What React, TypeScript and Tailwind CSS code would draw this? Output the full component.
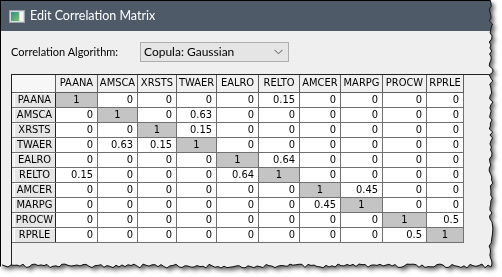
import React from "react";

const names = ["PAANA", "AMSCA", "XRSTS", "TWAER", "EALRO", "RELTO", "AMCER", "MARPG", "PROCW", "RPRLE"];

const pairs: [number, number, string][] = [
  [0, 5, "0.15"],
  [1, 3, "0.63"],
  [2, 3, "0.15"],
  [4, 5, "0.64"],
  [6, 7, "0.45"],
  [8, 9, "0.5"],
];

function valueAt(r: number, c: number) {
  if (r === c) return "1";
  for (const [a, b, v] of pairs) {
    if ((a === r && b === c) || (a === c && b === r)) return v;
  }
  return "0";
}

// jagged torn edge along right and bottom
function tornPoints() {
  let seed = 7;
  const rnd = () => {
    seed = (seed * 9301 + 49297) % 233280;
    return seed / 233280;
  };
  const pts: [number, number][] = [[0, 0], [490, 0]];
  for (let y = 3; y < 266; y += 3) pts.push([490 + rnd() * 4 - 1, y]);
  pts.push([491, 267]);
  for (let x = 488; x > 0; x -= 3) pts.push([x, 265 + rnd() * 4 - 1]);
  pts.push([0, 267]);
  return pts;
}

function WindowIcon() {
  return (
    <svg width="16" height="13" viewBox="0 0 16 13">
      <rect x="0.5" y="0.5" width="15" height="12" fill="#d9dde0" stroke="#9aa3a8" />
      <defs>
        <linearGradient id="tl" x1="0" y1="0" x2="1" y2="1">
          <stop offset="0" stopColor="#2f8f8a" />
          <stop offset="1" stopColor="#7fbf6a" />
        </linearGradient>
      </defs>
      <rect x="2" y="2" width="8" height="9" fill="url(#tl)" />
      <rect x="11" y="2" width="3" height="9" fill="#f4f6f7" />
    </svg>
  );
}

export default function App() {
  const pts = tornPoints();
  const clip = "polygon(" + pts.map(([x, y]) => `${x}px ${y}px`).join(",") + ")";
  const edge = pts.slice(1, pts.length - 1).map(([x, y]) => `${x},${y}`).join(" ");

  return (
    <div className="relative w-[502px] h-[277px] bg-white overflow-hidden font-['Lato',Arial,sans-serif]">
      <div className="drop-shadow-[3px_3px_2px_rgba(0,0,0,0.6)]">
        <div
          className="w-[502px] h-[277px] bg-[#efefef] border-l border-t border-black flex flex-col"
          style={{ clipPath: clip }}
        >
          <div className="h-[30px] bg-[#4f5a68] flex items-center pl-[8px] gap-[5px] text-white text-[12.5px]">
            <WindowIcon />
            <span>Edit Correlation Matrix</span>
          </div>

          <div className="flex items-center pl-[10px] mt-[11px] text-black">
            <span className="w-[129px] text-[11px]">Correlation Algorithm:</span>
            <div className="w-[149px] h-[20px] bg-[#e5e5e5] border border-[#adadad] flex items-center justify-between pl-[3px] pr-[5px] text-[12px]">
              <span>Copula: Gaussian</span>
              <svg width="9" height="6" viewBox="0 0 9 6">
                <path d="M0.5 0.8 L4.5 4.8 L8.5 0.8" fill="none" stroke="#555" strokeWidth="1" />
              </svg>
            </div>
          </div>

          <div className="ml-[10px] mt-[12px] flex-1 border-l border-t border-[#222] text-[11px] text-black font-['DejaVu_Sans_Condensed','DejaVu_Sans',sans-serif]">
            <div className="grid grid-cols-[44px_42px_40px_39px_40px_42px_41px_41px_42px_44px_37px] w-fit">
              <div className="h-[18px] bg-[#f7f7f7] border-r border-b border-[#5e5e5e]" />
              {names.map((n) => (
                <div
                  key={n}
                  className="h-[18px] bg-[#f0f0f0] border-r border-b border-[#5e5e5e] flex items-center justify-center"
                >
                  {n}
                </div>
              ))}
              {names.map((rn, r) => (
                <React.Fragment key={rn}>
                  <div className="h-[15px] pl-[2px] border-b border-[#707070] bg-[#efefef]">
                    <div className="h-full bg-[#e6e6e6] border-r border-[#222] shadow-[inset_1px_1px_0_#fff] flex items-center justify-center">
                      {rn}
                    </div>
                  </div>
                  {names.map((cn, c) =>
                    r === c ? (
                      <div
                        key={cn}
                        className="h-[15px] bg-[#c4c4c4] border-r border-b border-[#707070] flex items-center justify-center"
                      >
                        1
                      </div>
                    ) : (
                      <div
                        key={cn}
                        className="h-[15px] bg-white border-r border-b border-[#707070] flex items-center justify-end pr-[4px]"
                      >
                        {valueAt(r, c)}
                      </div>
                    )
                  )}
                </React.Fragment>
              ))}
            </div>
          </div>
        </div>
      </div>
      <svg className="absolute inset-0 pointer-events-none" width="502" height="277">
        <polyline points={edge} fill="none" stroke="#111" strokeWidth="1" />
      </svg>
    </div>
  );
}
